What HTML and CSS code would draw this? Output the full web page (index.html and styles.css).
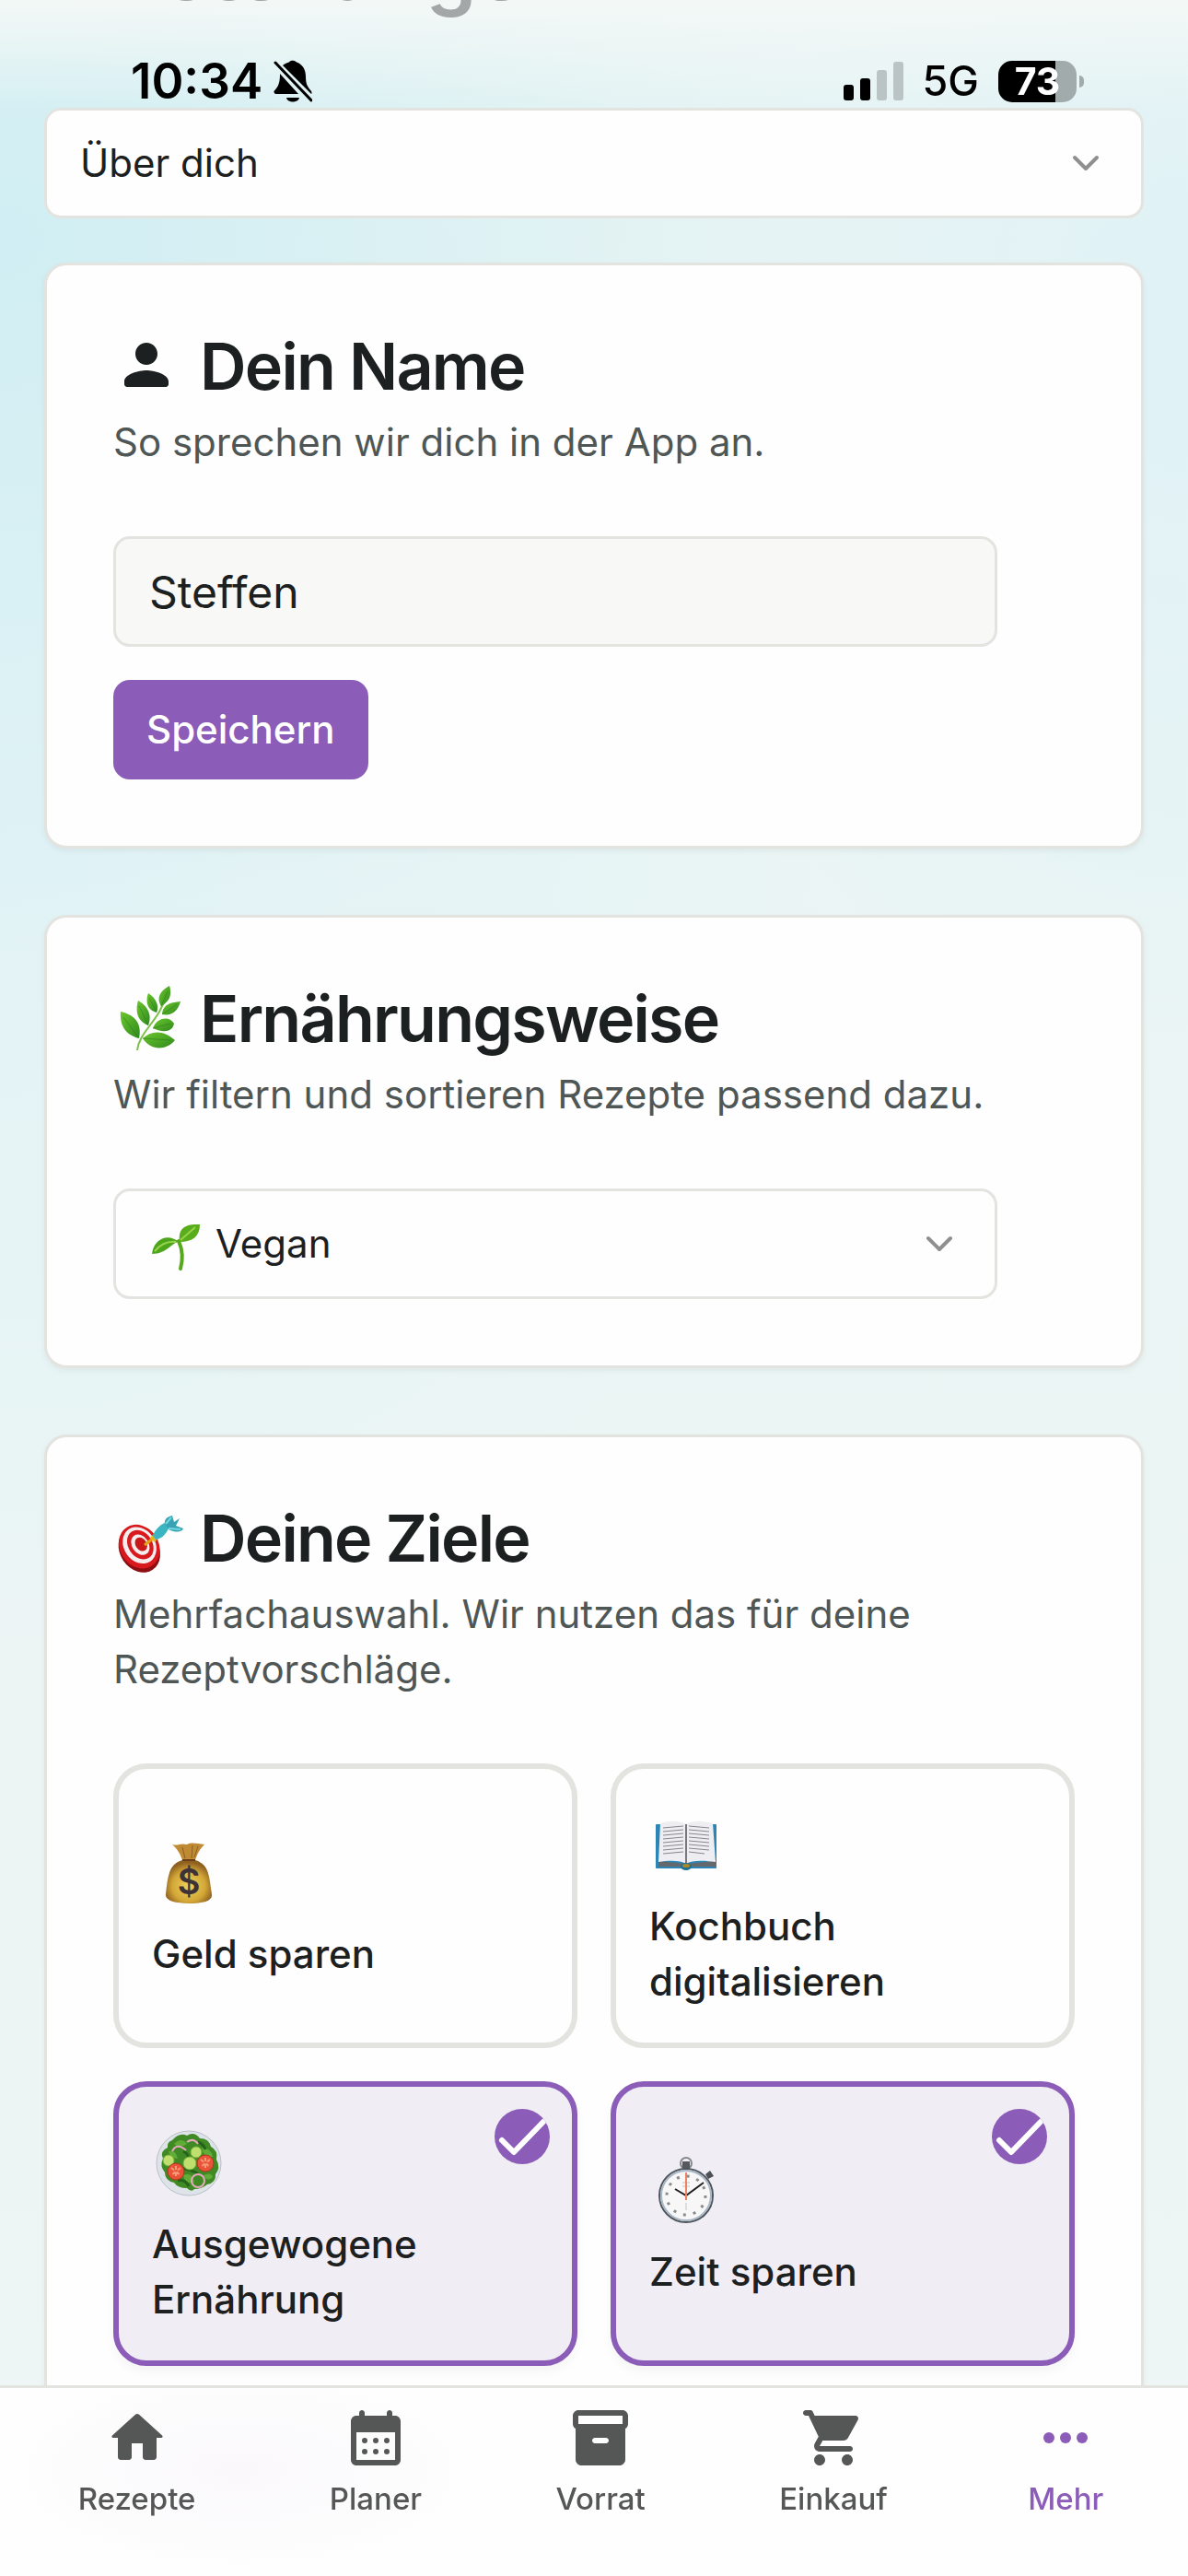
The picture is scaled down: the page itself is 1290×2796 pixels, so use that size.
FILE: index.html
```html
<!DOCTYPE html>
<html lang="de">
<head>
<meta charset="utf-8">
<meta name="viewport" content="width=device-width, initial-scale=1">
<title>Einstellungen</title>
<link rel="stylesheet" href="styles.css">
</head>
<body>
<div class="status-bar">
  <div class="status-group">
    <span class="status-time">10:34</span>
    <svg class="status-bell" viewBox="0 0 42 46" aria-hidden="true">
      <path d="M10 6 C12 4 15 3 17 2.500 C18 0 23 0 25 2.500 C32 5 35 11 35 18 C35 27 37 29 41 34 Q42 36 41 37 Z M7 15 L27 37 H3 Q0 37 0.500 34 C5 29 7 26 7 15 Z M14 41 H28 C27 47 15 47 14 41 Z"/>
      <path d="M2 3 L41 44" fill="none" stroke="#000" stroke-width="3" stroke-linecap="round"/>
    </svg>
  </div>
  <div class="status-group status-right">
    <svg class="status-signal" viewBox="0 0 65 42" aria-hidden="true">
      <rect y="25" width="11" height="17" rx="3"/><rect x="18" y="18" width="11" height="24" rx="3"/>
      <g fill="#bac4c5"><rect x="36" y="9" width="11" height="33" rx="3"/><rect x="54" width="11" height="42" rx="3"/></g>
    </svg>
    <span class="status-net">5G</span>
    <span class="battery"><span class="battery-level">73</span></span>
  </div>
</div>

<main class="page">
  <h1 class="page-title">Einstellungen</h1>

  <div class="select-box">
    <select class="select" aria-label="Bereich"><option>Über dich</option></select>
    <svg class="chevron" viewBox="0 0 24 24" aria-hidden="true"><path d="m6 9 6 6 6-6"/></svg>
  </div>

  <section class="card">
    <div class="card-head">
      <h2 class="card-title">
        <svg class="title-icon" viewBox="0 0 24 24" fill="currentColor" aria-hidden="true"><path d="M12 12c2.210 0 4-1.790 4-4s-1.790-4-4-4-4 1.790-4 4 1.790 4 4 4zm0 2c-2.670 0-8 1.340-8 4v1c0 .55.45 1 1 1h14c.55 0 1-.45 1-1v-1c0-2.660-5.330-4-8-4z"/></svg>
        <label for="name">Dein Name</label>
      </h2>
      <p class="card-text">So sprechen wir dich in der App an.</p>
    </div>
    <form class="name-form">
      <input class="field" id="name" type="text" value="Steffen">
      <button class="button" type="button">Speichern</button>
    </form>
  </section>

  <section class="card">
    <div class="card-head">
      <h2 class="card-title">
        <svg class="title-icon" viewBox="0 0 72 72" aria-hidden="true">
          <defs>
            <linearGradient id="leaf" x1="0" y1="0" x2="1" y2="1"><stop offset="0" stop-color="#6cc62c"/><stop offset="1" stop-color="#2f8a1e"/></linearGradient>
          </defs>
          <path d="M26 72 C27 62 33 54 39 46 C48 34 54 26 57 12" fill="none" stroke="#7cc047" stroke-width="2"/>
          <g fill="url(#leaf)">
            <path d="M52 24 C46 14 52 7 61 2 C64 12 61 19 52 24Z"/>
            <path d="M47 31 C36 28 35 18 38 10 C47 16 50 24 47 31Z"/>
            <path d="M38 45 C25 40 24 28 27 18 C39 25 42 35 38 45Z"/>
            <path d="M28 59 C11 55 7 42 8 30 C25 34 31 44 28 59Z"/>
            <path d="M53 33 C54 21 64 20 73 19 C70 30 63 35 53 33Z"/>
            <path d="M43 48 C48 35 62 35 66 43 C64 54 51 52 43 48Z"/>
            <path d="M32 59 C43 49 56 51 67 61 C57 73 40 72 32 59Z"/>
          </g>
          <g fill="none" stroke="#2c7f1c" stroke-width="1" opacity=".6"><path d="M52 24 L59 8M47 31 L39 15M38 45 L28 24M28 59 L11 36M53 33 L69 22M43 48 L62 43M32 59 L62 61"/></g>
        </svg>
        <label for="diet">Ernährungsweise</label>
      </h2>
      <p class="card-text">Wir filtern und sortieren Rezepte passend dazu.</p>
    </div>
    <div class="select-box select-narrow">
      <svg class="option-icon" viewBox="0 0 54 60" aria-hidden="true">
        <path d="M32 27 C36 36 37 46 34 57" fill="none" stroke="#56a81c" stroke-width="4" stroke-linecap="round"/>
        <path d="M33 28 C31 13 39 8 55 9 C55 22 47 28 33 28Z" fill="#59ad1c"/>
        <path d="M32 28 C20 18 5 25 3 41 C19 41 24 29 32 28Z" fill="#4da51b"/>
        <path d="M34 26 L50 12M29 28 C19 27 12 31 6 38" fill="none" stroke="#96d44b" stroke-width="2"/>
      </svg>
      <select class="select" id="diet"><option>Vegan</option></select>
      <svg class="chevron" viewBox="0 0 24 24" aria-hidden="true"><path d="m6 9 6 6 6-6"/></svg>
    </div>
  </section>

  <section class="card">
    <div class="card-head">
      <h2 class="card-title" id="goals">
        <svg class="title-icon" viewBox="0 0 72 72" aria-hidden="true">
          <g transform="rotate(-34 28 48)">
            <ellipse cx="27" cy="50" rx="21" ry="26" fill="#8e0f12"/>
            <ellipse cx="29" cy="47" rx="21" ry="25" fill="#d8191d"/>
            <ellipse cx="30" cy="46" rx="17" ry="21" fill="#f6eeee"/>
            <ellipse cx="31" cy="46" rx="13" ry="17" fill="#d8191d"/>
            <ellipse cx="31" cy="46" rx="9" ry="12" fill="#f6eeee"/>
            <ellipse cx="32" cy="46" rx="6" ry="8" fill="#c9171b"/>
          </g>
          <path d="M34 45 L43 38" stroke="#e0a313" stroke-width="3"/>
          <path d="M40 37 L45 42 L49 37 L44 33Z" fill="#e8b51c"/>
          <path d="M43 35 C45 28 52 22 58 20 L60 27 C57 34 51 39 46 39Z" fill="#3bb5c2"/>
          <path d="M56 22 C55 17 59 14 64 13 L66 20 L72 16 L68 24 L76 27 C75 31 68 32 60 28Z" fill="#39a3b4"/>
          <path d="M57 22 L63 15M60 27 L73 28" stroke="#6fd9df" stroke-width="2"/>
        </svg>
        Deine Ziele
      </h2>
      <p class="card-text">Mehrfachauswahl. Wir nutzen das für deine Rezeptvorschläge.</p>
    </div>
    <div class="goals" role="group" aria-labelledby="goals">
      <label class="goal">
        <input class="goal-input" type="checkbox">
        <svg class="goal-icon" viewBox="0 0 80 96" aria-hidden="true">
          <defs><radialGradient id="bag" cx=".5" cy=".6" r=".55"><stop offset="0" stop-color="#edd45c"/><stop offset=".65" stop-color="#d3a737"/><stop offset="1" stop-color="#8f6120"/></radialGradient></defs>
          <path d="M33 33 C18 37 17 52 15 70 C14 77 25 80 40 80 C56 80 66 77 65 70 C62 52 63 38 47 33Z" fill="url(#bag)"/>
          <path d="M22 16 C29 18 30 14 38 16 C43 13 49 15 57 16 C51 22 49 27 47 33 H33 C31 27 28 21 22 16Z" fill="#c08a35"/>
          <path d="M33 19 L36 31M44 17 L43 31M50 18 L46 30" stroke="#8d5e1f" stroke-width="1"/>
          <path d="M33 33 H47" stroke="#6b3b12" stroke-width="2"/>
          <text class="bag-sign" x="40" y="70" text-anchor="middle">$</text>
        </svg>
        <span>Geld sparen</span>
      </label>
      <label class="goal">
        <input class="goal-input" type="checkbox">
        <svg class="goal-icon" viewBox="0 0 80 96" aria-hidden="true">
          <rect x="7" y="24" width="66" height="48" rx="1" fill="#2c85b4"/>
          <path d="M10 64 L40 67 L72 64 V70 H44 Q40 73 36 70 H10Z" fill="#66696b"/>
          <path d="M12 23 C22 20 34 20 40 24 C46 20 58 20 69 23 L72 65 C58 63 46 63 40 67 C34 63 22 63 10 65Z" fill="#eeeef2"/>
          <path d="M40 24 V67" stroke="#77777e" stroke-width="2"/>
          <path d="M15 28 L37 26M15 32 L37 30M15 36 L37 34M15 40 L37 38M15 44 L37 42M15 48 L37 46M15 52 L37 50M15 56 L37 54M43 26 L65 28M43 30 L65 32M43 34 L65 36M43 38 L65 40M43 42 L65 44M43 46 L65 48M43 50 L65 52M43 54 L60 56" stroke="#86868d" stroke-width="1"/>
          <ellipse cx="40" cy="70" rx="6" ry="4" fill="#1f6f96"/><ellipse cx="40" cy="69" rx="4" ry="2" fill="#a98b26"/>
        </svg>
        <span>Kochbuch digitalisieren</span>
      </label>
      <label class="goal">
        <input class="goal-input" type="checkbox" checked>
        <svg class="goal-icon" viewBox="0 0 80 96" aria-hidden="true">
          <circle cx="40" cy="47" r="35" fill="#dde3e8" stroke="#b9c1c6" stroke-width="1"/>
          <path d="M22 22 Q30 13 38 17 Q46 12 52 20 Q62 20 64 29 Q72 33 70 43 Q75 52 69 59 Q70 68 60 70 Q54 75 46 75 Q43 79 38 74 Q28 74 24 68 Q14 66 14 57 Q8 50 12 42 Q8 34 17 30 Q16 24 22 22Z" fill="#3f8a24"/>
          <path d="M24 26 Q32 18 38 26 Q30 32 24 26ZM54 30 Q64 30 66 40 Q56 42 54 30ZM34 60 Q44 56 46 68 Q36 70 34 60ZM56 60 Q64 56 66 62 Q60 68 56 60ZM18 34 Q26 32 28 42 Q20 42 18 34Z" fill="#61ac38"/>
          <path d="M34 34 Q42 38 38 44M50 24 Q56 26 58 32M28 66 Q36 64 40 72M32 52 Q42 54 50 58" fill="none" stroke="#26631a" stroke-width="3"/>
          <g fill="#bfe06f" stroke="#78b43b" stroke-width="1"><circle cx="18" cy="44" r="6"/><circle cx="48" cy="35" r="6"/><circle cx="41" cy="47" r="7"/></g>
          <g fill="#e8533a" stroke="#b8321f" stroke-width="1"><circle cx="26" cy="56" r="9"/><circle cx="58" cy="47" r="9"/></g>
          <path d="M21 52 L31 60M31 52 L21 60M26 50 V62M53 43 L63 51M63 43 L53 51M58 41 V53" stroke="#f59a75" stroke-width="2" stroke-dasharray="4 3"/>
          <g fill="none" stroke="#e7a9bd" stroke-width="2"><circle cx="50" cy="66" r="7"/><path d="M22 34 Q27 24 37 33M38 24 Q45 19 50 26"/></g>
        </svg>
        <span>Ausgewogene Ernährung</span>
        <svg class="goal-check" viewBox="0 0 60 60" aria-hidden="true"><path d="M8 34 L21 47 L53 14"/></svg>
      </label>
      <label class="goal">
        <input class="goal-input" type="checkbox" checked>
        <svg class="goal-icon" viewBox="0 0 80 96" aria-hidden="true">
          <circle cx="40" cy="17" r="6" fill="none" stroke="#85888c" stroke-width="2"/>
          <path d="M36 15 H44 V24 H36Z" fill="#56595d"/>
          <path d="M61 29 L66 25 L70 31 L64 34Z" fill="#4c5054"/>
          <circle cx="40" cy="52" r="29" fill="#f7f7f7" stroke="#4f555c" stroke-width="2"/>
          <circle cx="40" cy="52" r="27" fill="none" stroke="#a9b6c6" stroke-width="2"/>
          <circle cx="40" cy="52" r="21" fill="none" stroke="#8a8a8a" stroke-width="3" stroke-dasharray="3 8"/>
          <path d="M36 38 H44M36 42 H44M40 60 V68" stroke="#c4c4c6" stroke-width="1"/>
          <path d="M28 45 L40 52 L59 38" fill="none" stroke="#222" stroke-width="2"/>
          <path d="M40 27 V57" stroke="#f08062" stroke-width="2"/>
        </svg>
        <span>Zeit sparen</span>
        <svg class="goal-check" viewBox="0 0 60 60" aria-hidden="true"><path d="M8 34 L21 47 L53 14"/></svg>
      </label>
    </div>
  </section>
</main>

<nav class="tab-bar" aria-label="Hauptmenü">
  <a class="tab" href="#rezepte">
    <svg class="tab-icon" viewBox="0 0 24 24" aria-hidden="true"><path d="M10 19v-5h4v5c0 .55.45 1 1 1h3c.55 0 1-.45 1-1v-7h1.700c.46 0 .68-.57.33-.87L12.670 3.600c-.38-.34-.96-.34-1.340 0l-8.360 7.530c-.34.3-.13.87.33.87H5v7c0 .55.45 1 1 1h3c.55 0 1-.45 1-1z"/></svg>
    Rezepte
  </a>
  <a class="tab" href="#planer">
    <svg class="tab-icon" viewBox="0 0 24 24" aria-hidden="true"><path fill-rule="evenodd" d="M17 2c-.55 0-1 .45-1 1v1H8V3c0-.55-.45-1-1-1s-1 .45-1 1v1H5c-1.110 0-2 .9-2 2v14c0 1.100.89 2 2 2h14c1.100 0 2-.9 2-2V6c0-1.100-.9-2-2-2h-1V3c0-.55-.45-1-1-1zm2 18H5V10h14v10z"/><circle cx="8" cy="13" r="1"/><circle cx="12" cy="13" r="1"/><circle cx="16" cy="13" r="1"/><circle cx="8" cy="17" r="1"/><circle cx="12" cy="17" r="1"/><circle cx="16" cy="17" r="1"/></svg>
    Planer
  </a>
  <a class="tab" href="#vorrat">
    <svg class="tab-icon" viewBox="0 0 24 24" aria-hidden="true"><path fill-rule="evenodd" d="M20 2H4c-1 0-2 .9-2 2v3.010c0 .72.43 1.340 1 1.690V20c0 1.100 1.100 2 2 2h14c.9 0 2-.9 2-2V8.700c.57-.35 1-.97 1-1.690V4c0-1.100-1-2-2-2zm-6 12h-4c-.55 0-1-.45-1-1s.45-1 1-1h4c.55 0 1 .45 1 1s-.45 1-1 1zm6-7H4V4h16v3z"/></svg>
    Vorrat
  </a>
  <a class="tab" href="#einkauf">
    <svg class="tab-icon" viewBox="0 0 24 24" aria-hidden="true"><path d="M7 18c-1.100 0-1.990.9-1.990 2S5.900 22 7 22s2-.9 2-2-.9-2-2-2zM1 3c0 .55.45 1 1 1h1l3.600 7.590-1.350 2.440C4.520 15.370 5.480 17 7 17h11c.55 0 1-.45 1-1s-.45-1-1-1H7l1.100-2h7.450c.75 0 1.410-.41 1.750-1.030l3.580-6.490c.37-.66-.11-1.480-.87-1.480H5.210l-.67-1.430c-.16-.35-.52-.57-.9-.57H2c-.55 0-1 .45-1 1zm16 15c-1.100 0-1.990.9-1.990 2s.89 2 1.990 2 2-.9 2-2-.9-2-2-2z"/></svg>
    Einkauf
  </a>
  <a class="tab tab-active" href="#mehr" aria-current="page">
    <svg class="tab-icon" viewBox="0 0 24 24" aria-hidden="true"><circle cx="6" cy="12" r="2"/><circle cx="12" cy="12" r="2"/><circle cx="18" cy="12" r="2"/></svg>
    Mehr
  </a>
</nav>
</body>
</html>
```
FILE: styles.css
```css
:root {
  --ink: #1d2020;
  --muted: #4f5656;
  --line: #e3e3e0;
  --accent: #8b5cb8;
  --accent-soft: #f1edf5;
}

* {
  box-sizing: border-box;
}

body {
  margin: 0;
  min-height: 100vh;
  overflow-x: hidden;
  font-family: Inter, "Liberation Sans", sans-serif;
  font-size: 42px;
  line-height: 60px;
  color: var(--ink);
  background:
    linear-gradient(#f3f8f6, rgba(243, 248, 246, 0) 120px),
    radial-gradient(ellipse 900px 800px at 0 260px, #d0eef3, rgba(208, 238, 243, 0)),
    radial-gradient(ellipse 600px 800px at 100% 360px, #e0f2f6, rgba(224, 242, 246, 0)),
    radial-gradient(ellipse 900px 900px at 0 900px, #e2f3f6, rgba(226, 243, 246, 0)),
    linear-gradient(#e8f4f4, #ebf5f4 1600px, #eff6f5);
}

/* Status bar */
.status-bar {
  position: fixed;
  z-index: 2;
  top: 0;
  left: 0;
  right: 0;
  display: flex;
  justify-content: space-between;
  padding: 58px 113px 0 142px;
  color: #000;
}

.status-group {
  display: flex;
  align-items: center;
  gap: 12px;
}

.status-right {
  gap: 21px;
}

.status-time {
  font-size: 53px;
  font-weight: 600;
}

.status-bell {
  width: 42px;
  height: 46px;
}

.status-signal {
  width: 65px;
  height: 42px;
}

.status-net {
  font-size: 45px;
  font-weight: 500;
}

.battery {
  position: relative;
  width: 85px;
  height: 45px;
  margin-right: 8px;
  border-radius: 15px;
  background: linear-gradient(90deg, #000 73%, #a2abac 73%);
}

.battery::after {
  content: "";
  position: absolute;
  left: 88px;
  top: 16px;
  width: 5px;
  height: 13px;
  border-radius: 0 5px 5px 0;
  background: #a2abac;
}

.battery-level {
  display: block;
  font-size: 41px;
  font-weight: 700;
  line-height: 45px;
  text-align: center;
  color: #fff;
}

/* Page */
.page {
  display: flex;
  flex-direction: column;
  margin-top: -86px;
  padding: 0 48px;
}

.page-title {
  margin: 0 0 95px;
  font-size: 88px;
  font-weight: 600;
  line-height: 108px;
  color: #a3a7a7;
}

.select-box {
  display: flex;
  align-items: center;
  height: 120px;
  padding: 0 36px;
  border: 3px solid var(--line);
  border-radius: 18px;
  background: #fefefe;
}

.select-narrow {
  max-width: 960px;
  gap: 18px;
}

.select {
  flex: 1;
  min-width: 0;
  height: 100%;
  padding: 0;
  border: 0;
  appearance: none;
  background: none;
  font: inherit;
  color: inherit;
}

.chevron {
  width: 48px;
  height: 48px;
  fill: none;
  stroke: #8f8f8f;
  stroke-width: 2;
  stroke-linecap: round;
  stroke-linejoin: round;
}

.option-icon {
  width: 54px;
  height: 60px;
  overflow: visible;
}

.card {
  display: flex;
  flex-direction: column;
  gap: 72px;
  margin-top: 72px;
  padding: 72px;
  border: 3px solid var(--line);
  border-radius: 24px;
  background: #fefefe;
  box-shadow: 0 3px 6px rgba(0, 0, 0, 0.05);
}

.select-box + .card {
  margin-top: 48px;
}

.card-head {
  display: flex;
  flex-direction: column;
  gap: 14px;
}

.card-title {
  display: flex;
  align-items: flex-start;
  gap: 22px;
  margin: 0;
  font-size: 70px;
  font-weight: 600;
  line-height: 76px;
  letter-spacing: -0.025em;
}

.title-icon {
  width: 72px;
  height: 72px;
  overflow: visible;
}

.card-text {
  margin: 0;
  color: var(--muted);
}

.name-form {
  display: flex;
  flex-direction: column;
  align-items: flex-start;
  gap: 36px;
}

.field {
  width: 100%;
  max-width: 960px;
  height: 120px;
  padding: 0 36px;
  border: 3px solid var(--line);
  border-radius: 18px;
  background: #f8f8f7;
  font: inherit;
  font-size: 48px;
  color: inherit;
}

.button {
  height: 108px;
  padding: 0 36px;
  border: 0;
  border-radius: 18px;
  background: var(--accent);
  font: inherit;
  font-weight: 500;
  color: #fff;
}

/* Goals */
.goals {
  display: grid;
  grid-template-columns: 1fr 1fr;
  gap: 36px;
}

.goal {
  position: relative;
  display: flex;
  flex-direction: column;
  justify-content: center;
  gap: 9px;
  padding: 36px;
  border: 6px solid var(--line);
  border-radius: 36px;
  font-weight: 500;
}

.goal:has(:checked) {
  border-color: var(--accent);
  background: var(--accent-soft);
  box-shadow: 0 6px 12px rgba(0, 0, 0, 0.04);
}

.goal-input {
  position: absolute;
  inset: 0;
  width: 100%;
  height: 100%;
  margin: 0;
  opacity: 0;
}

.goal-icon {
  width: 80px;
  height: 96px;
}

.bag-sign {
  font-size: 38px;
  font-weight: 600;
  fill: #3d3236;
}

.goal-check {
  position: absolute;
  top: 24px;
  right: 24px;
  width: 60px;
  height: 60px;
  border-radius: 50%;
  background: var(--accent);
  fill: none;
  stroke: #fff;
  stroke-width: 6;
  stroke-linecap: round;
  stroke-linejoin: round;
}

/* Tab bar */
.tab-bar {
  position: fixed;
  z-index: 1;
  left: 0;
  right: 0;
  bottom: 0;
  display: flex;
  justify-content: space-around;
  padding: 18px 12px 60px;
  border-top: 3px solid var(--line);
  background: radial-gradient(ellipse 260px 110px at 260px 90px, #faf8fb, #fefefe);
}

.tab {
  display: flex;
  flex-direction: column;
  align-items: center;
  gap: 6px;
  min-width: 96px;
  font-size: 33px;
  font-weight: 500;
  line-height: 48px;
  text-decoration: none;
  color: #555756;
}

.tab-active {
  color: var(--accent);
}

.tab-icon {
  width: 72px;
  height: 72px;
  fill: currentColor;
}
```
